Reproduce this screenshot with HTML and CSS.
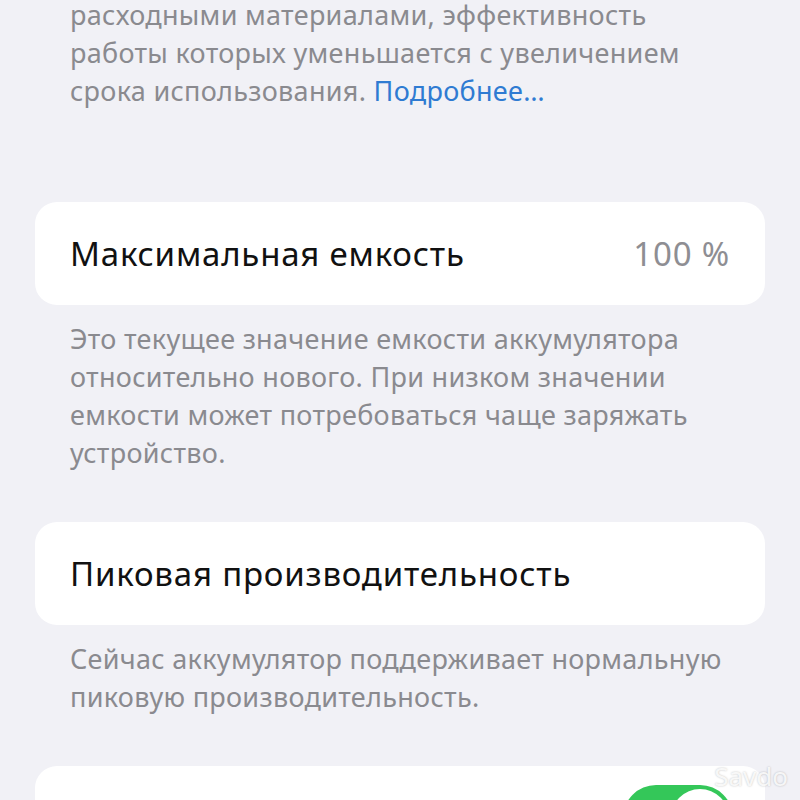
FILE: index.html
```html
<!DOCTYPE html>
<html lang="ru">
<head>
  <meta charset="UTF-8">
  <meta name="viewport" content="width=device-width, initial-scale=1.0">
  <link rel="stylesheet" href="styles.css">
  <title>Состояние аккумулятора</title>
</head>
<body>
  <div class="settings">
    <p class="note note-top">
      расходными материалами, эффективность<br>
      работы которых уменьшается с увеличением<br>
      срока использования. <span class="link">Подробнее…</span>
    </p>

    <div class="card">
      <span class="card-title">Максимальная емкость</span>
      <span class="card-value">100 %</span>
    </div>
    <p class="note">
      Это текущее значение емкости аккумулятора<br>
      относительно нового. При низком значении<br>
      емкости может потребоваться чаще заряжать<br>
      устройство.
    </p>

    <div class="card">
      <span class="card-title">Пиковая производительность</span>
    </div>
    <p class="note">
      Сейчас аккумулятор поддерживает нормальную<br>
      пиковую производительность.
    </p>

    <div class="card card-switch">
      <span class="toggle"><span class="toggle-knob"></span></span>
    </div>
  </div>
  <div class="watermark">Savdo</div>
</body>
</html>
```

FILE: styles.css
```css
body {
  margin: 0;
  background-color: #f1f1f6;
  font-family: 'Noto Sans', Roboto, sans-serif;
  overflow: hidden;
  height: 800px;
  position: relative;
}

.settings {
  padding: 0 35px;
  margin-top: -4px;
}

.note {
  margin: 15px 0 0;
  padding: 0 35px;
  font-size: 27px;
  letter-spacing: 0.3px;
  line-height: 38px;
  color: #8a8a8f;
}

.note-top {
  margin-top: 0;
}

.link {
  color: #2f7bd2;
}

.card {
  display: flex;
  align-items: center;
  justify-content: space-between;
  height: 103px;
  padding: 0 35px;
  background-color: #fff;
  border-radius: 22px;
  margin-top: 50px;
}

.note-top + .card {
  margin-top: 92px;
}

.card-switch {
  justify-content: flex-end;
}

.card-title {
  font-size: 33px;
  letter-spacing: 0.8px;
  color: #111;
}

.card-value {
  font-size: 33px;
  letter-spacing: 0.8px;
  color: #8e8e93;
}

.toggle {
  position: relative;
  width: 110px;
  height: 66px;
  border-radius: 33px;
  background-color: #34c759;
  margin-right: -3px;
}

.toggle-knob {
  position: absolute;
  top: 4px;
  right: 4px;
  width: 58px;
  height: 58px;
  border-radius: 50%;
  background-color: #fff;
}

.watermark {
  position: absolute;
  right: 12px;
  top: 758px;
  font-size: 26px;
  color: rgba(255, 255, 255, 0.85);
  text-shadow: 0 0 2px rgba(0, 0, 0, 0.25);
}
```
